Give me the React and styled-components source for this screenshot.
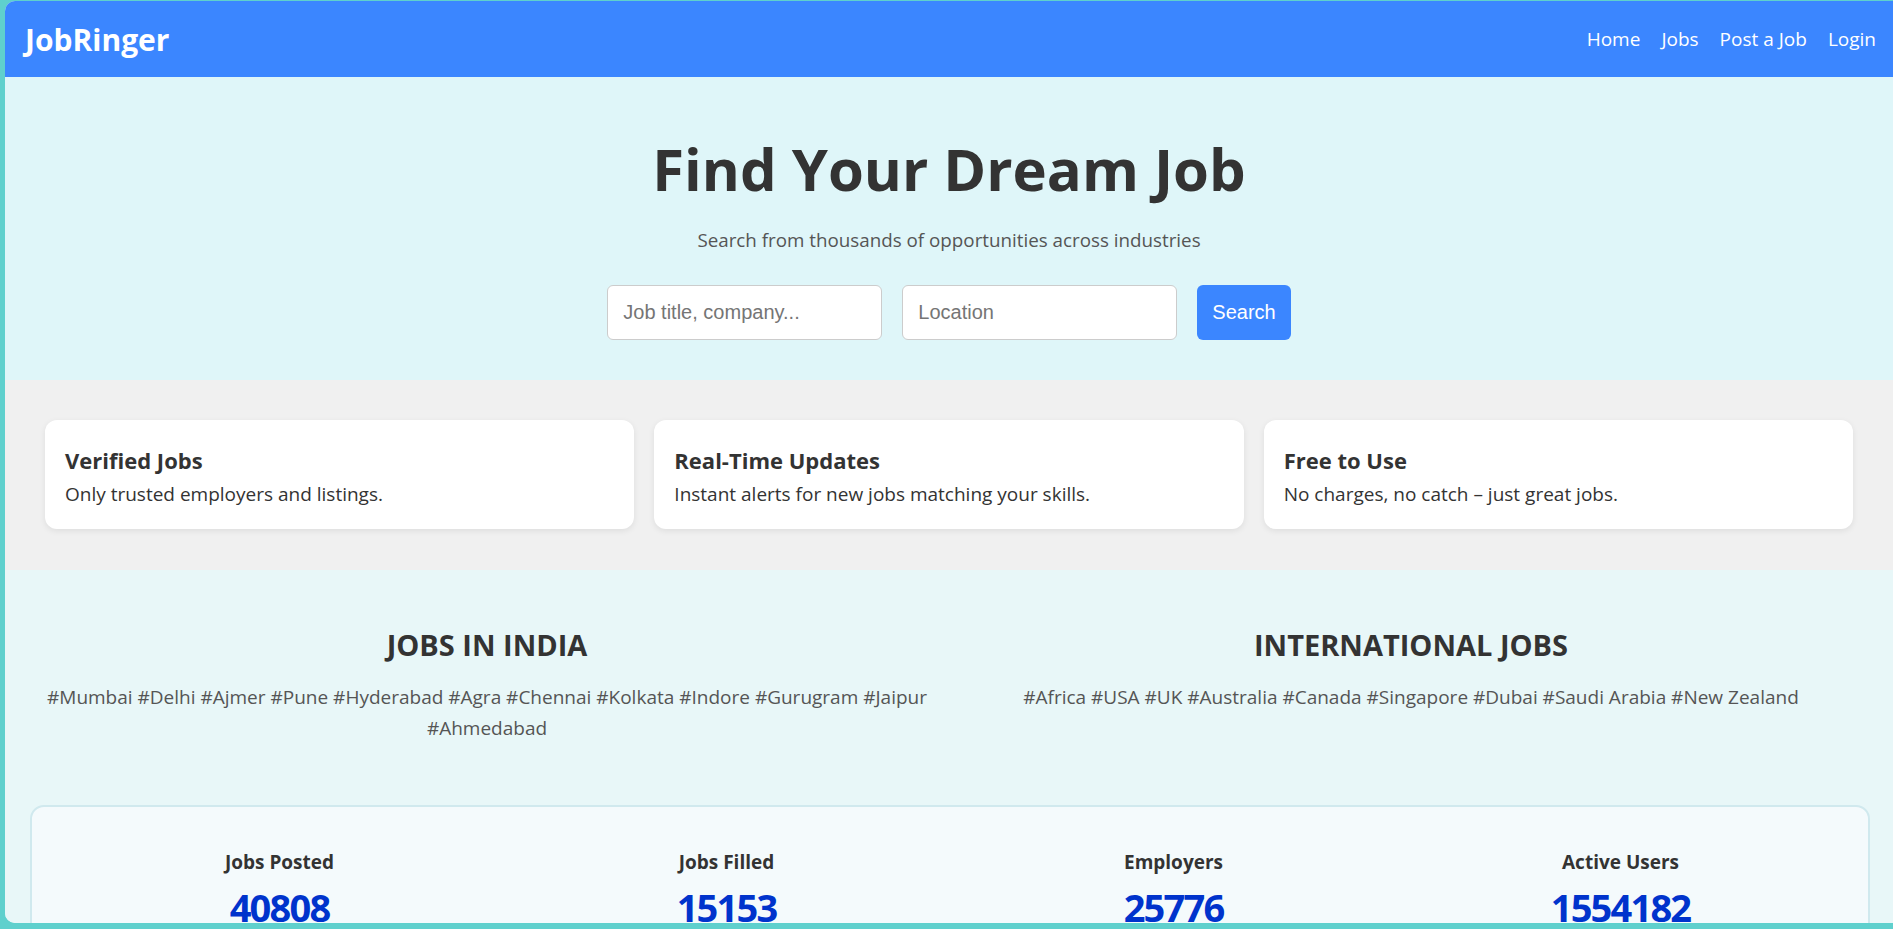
import React from "react";
import styled, { createGlobalStyle } from "styled-components";

const GlobalStyle = createGlobalStyle`
  * { box-sizing: border-box; }
  html, body { margin: 0; padding: 0; }
  body {
    background: #5fd0cd;
    font-family: "Segoe UI", "Open Sans", "Noto Sans", sans-serif;
    color: #333;
    overflow: hidden;
  }
`;

const Frame = styled.div`
  margin: 1px 0 0 5px;
  height: 922px;
  border-radius: 10px 0 0 10px;
  overflow: hidden;
  background: #e8f7f8;
  display: flex;
  flex-direction: column;
`;

const NavBar = styled.header`
  flex: 0 0 76px;
  background: #3b86ff;
  display: flex;
  align-items: center;
  justify-content: space-between;
  padding: 0 17px 0 20px;
  color: #fff;
`;

const Logo = styled.div`
  font-size: 30px;
  font-weight: 700;
`;

const NavLinks = styled.nav`
  display: flex;
  gap: 21px;
`;

const NavLink = styled.a`
  color: #fff;
  text-decoration: none;
  font-size: 19px;
`;

const Hero = styled.section`
  background: #dff6f9;
  padding: 56px 20px 40px;
  text-align: center;
`;

const Title = styled.h1`
  margin: 0;
  font-size: 58px;
  line-height: 72px;
  font-weight: 700;
  color: #333;
`;

const Subtitle = styled.p`
  margin: 20px 0 30px;
  font-size: 18.8px;
  line-height: 30px;
  color: #555;
`;

const SearchRow = styled.form`
  display: flex;
  justify-content: center;
  gap: 20px;
`;

const Input = styled.input`
  width: 275px;
  height: 55px;
  padding: 0 15px;
  border: 1px solid #ccc;
  border-radius: 6px;
  background: #fff;
  font-family: "Liberation Sans", Arial, sans-serif;
  font-size: 20px;
  color: #333;
  outline: none;
  &::placeholder { color: #757575; }
`;

const SearchButton = styled.button`
  height: 55px;
  padding: 0 15px;
  border: none;
  border-radius: 6px;
  background: #3b86ff;
  color: #fff;
  font-family: "Liberation Sans", Arial, sans-serif;
  font-size: 20px;
  cursor: pointer;
`;

const Features = styled.section`
  background: #f0f0f0;
  padding: 40px 40px 41px;
  display: grid;
  grid-template-columns: repeat(3, 1fr);
  gap: 20px;
`;

const FeatureCard = styled.div`
  background: #fff;
  border-radius: 12px;
  padding: 25px 20px 20px;
  box-shadow: 0 2px 6px rgba(0, 0, 0, 0.08);
`;

const FeatureTitle = styled.h3`
  margin: 0 0 4px;
  font-size: 22px;
  line-height: 30px;
  font-weight: 700;
  color: #333;
`;

const FeatureText = styled.p`
  margin: 0;
  font-size: 19px;
  line-height: 30px;
  color: #333;
`;

const Locations = styled.section`
  background: #e8f7f8;
  padding: 57px 40px 0;
  display: grid;
  grid-template-columns: 1fr 1fr;
  gap: 40px;
  text-align: center;
`;

const LocationColumn = styled.div``;

const LocationHeading = styled.h2`
  margin: 0 0 19px;
  font-size: 29px;
  line-height: 36px;
  font-weight: 700;
  color: #333;
`;

const Tags = styled.p`
  margin: 0;
  font-size: 19px;
  line-height: 31px;
  color: #555;
`;

const StatsWrap = styled.section`
  background: #e8f7f8;
  padding: 61px 23px 0 25px;
`;

const StatsCard = styled.div`
  background: #f4fafc;
  border: 2px solid #d0e9ee;
  border-radius: 14px;
  padding: 40px 24px 30px;
  display: grid;
  grid-template-columns: repeat(4, 1fr);
  text-align: center;
`;

const Stat = styled.div``;

const StatLabel = styled.div`
  font-size: 19px;
  line-height: 30px;
  font-weight: 700;
  color: #333;
`;

const StatValue = styled.div`
  margin-top: 6px;
  font-size: 38px;
  line-height: 48px;
  font-weight: 700;
  letter-spacing: -1.8px;
  color: #0033cc;
`;

const features = [
  { title: "Verified Jobs", text: "Only trusted employers and listings." },
  { title: "Real-Time Updates", text: "Instant alerts for new jobs matching your skills." },
  { title: "Free to Use", text: "No charges, no catch – just great jobs." },
];

const india = ["Mumbai", "Delhi", "Ajmer", "Pune", "Hyderabad", "Agra", "Chennai", "Kolkata", "Indore", "Gurugram", "Jaipur", "Ahmedabad"];
const intl = ["Africa", "USA", "UK", "Australia", "Canada", "Singapore", "Dubai", "Saudi Arabia", "New Zealand"];

const stats = [
  { label: "Jobs Posted", value: 40808 },
  { label: "Jobs Filled", value: 15153 },
  { label: "Employers", value: 25776 },
  { label: "Active Users", value: 1554182 },
];

export default function App() {
  return (
    <>
      <GlobalStyle />
      <Frame>
        <NavBar>
          <Logo>JobRinger</Logo>
          <NavLinks>
            <NavLink href="#">Home</NavLink>
            <NavLink href="#">Jobs</NavLink>
            <NavLink href="#">Post a Job</NavLink>
            <NavLink href="#">Login</NavLink>
          </NavLinks>
        </NavBar>
        <Hero>
          <Title>Find Your Dream Job</Title>
          <Subtitle>Search from thousands of opportunities across industries</Subtitle>
          <SearchRow onSubmit={(e) => e.preventDefault()}>
            <Input placeholder="Job title, company..." />
            <Input placeholder="Location" />
            <SearchButton type="submit">Search</SearchButton>
          </SearchRow>
        </Hero>
        <Features>
          {features.map((f) => (
            <FeatureCard key={f.title}>
              <FeatureTitle>{f.title}</FeatureTitle>
              <FeatureText>{f.text}</FeatureText>
            </FeatureCard>
          ))}
        </Features>
        <Locations>
          <LocationColumn>
            <LocationHeading>JOBS IN INDIA</LocationHeading>
            <Tags>{india.map((c) => "#" + c).join(" ")}</Tags>
          </LocationColumn>
          <LocationColumn>
            <LocationHeading>INTERNATIONAL JOBS</LocationHeading>
            <Tags>{intl.map((c) => "#" + c).join(" ")}</Tags>
          </LocationColumn>
        </Locations>
        <StatsWrap>
          <StatsCard>
            {stats.map((s) => (
              <Stat key={s.label}>
                <StatLabel>{s.label}</StatLabel>
                <StatValue>{s.value}</StatValue>
              </Stat>
            ))}
          </StatsCard>
        </StatsWrap>
      </Frame>
    </>
  );
}
